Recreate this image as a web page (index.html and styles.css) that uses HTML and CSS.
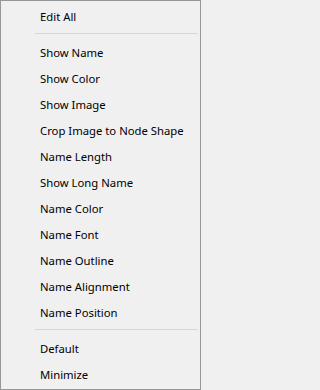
FILE: index.html
```html
<!DOCTYPE html>
<html>
<head>
<meta charset="utf-8">
<link rel="stylesheet" href="styles.css">
</head>
<body>
<div class="menu">
  <div class="item">Edit All</div>
  <div class="sep"></div>
  <div class="item">Show Name</div>
  <div class="item">Show Color</div>
  <div class="item">Show Image</div>
  <div class="item">Crop Image to Node Shape</div>
  <div class="item">Name Length</div>
  <div class="item">Show Long Name</div>
  <div class="item">Name Color</div>
  <div class="item">Name Font</div>
  <div class="item">Name Outline</div>
  <div class="item">Name Alignment</div>
  <div class="item">Name Position</div>
  <div class="sep"></div>
  <div class="item">Default</div>
  <div class="item">Minimize</div>
</div>
</body>
</html>
```
FILE: styles.css
```css
html, body {
  margin: 0;
  padding: 0;
  background: #f0f0f0;
}
.menu {
  box-sizing: border-box;
  width: 201px;
  height: 390px;
  border: 1px solid #979797;
  background: #f0f0f0;
  padding-top: 3px;
  display: flex;
  flex-direction: column;
  font-family: "Segoe UI", "Noto Sans", sans-serif;
  font-size: 11.3px;
  color: #000;
}
.item {
  box-sizing: border-box;
  height: 26px;
  line-height: 26px;
  padding-left: 39px;
  white-space: nowrap;
}
.sep {
  box-sizing: border-box;
  height: 10px;
  padding-top: 3px;
  margin-left: 34px;
  margin-right: 2px;
}
.sep::before {
  content: "";
  display: block;
  height: 1px;
  background: #d7d7d7;
}
```
